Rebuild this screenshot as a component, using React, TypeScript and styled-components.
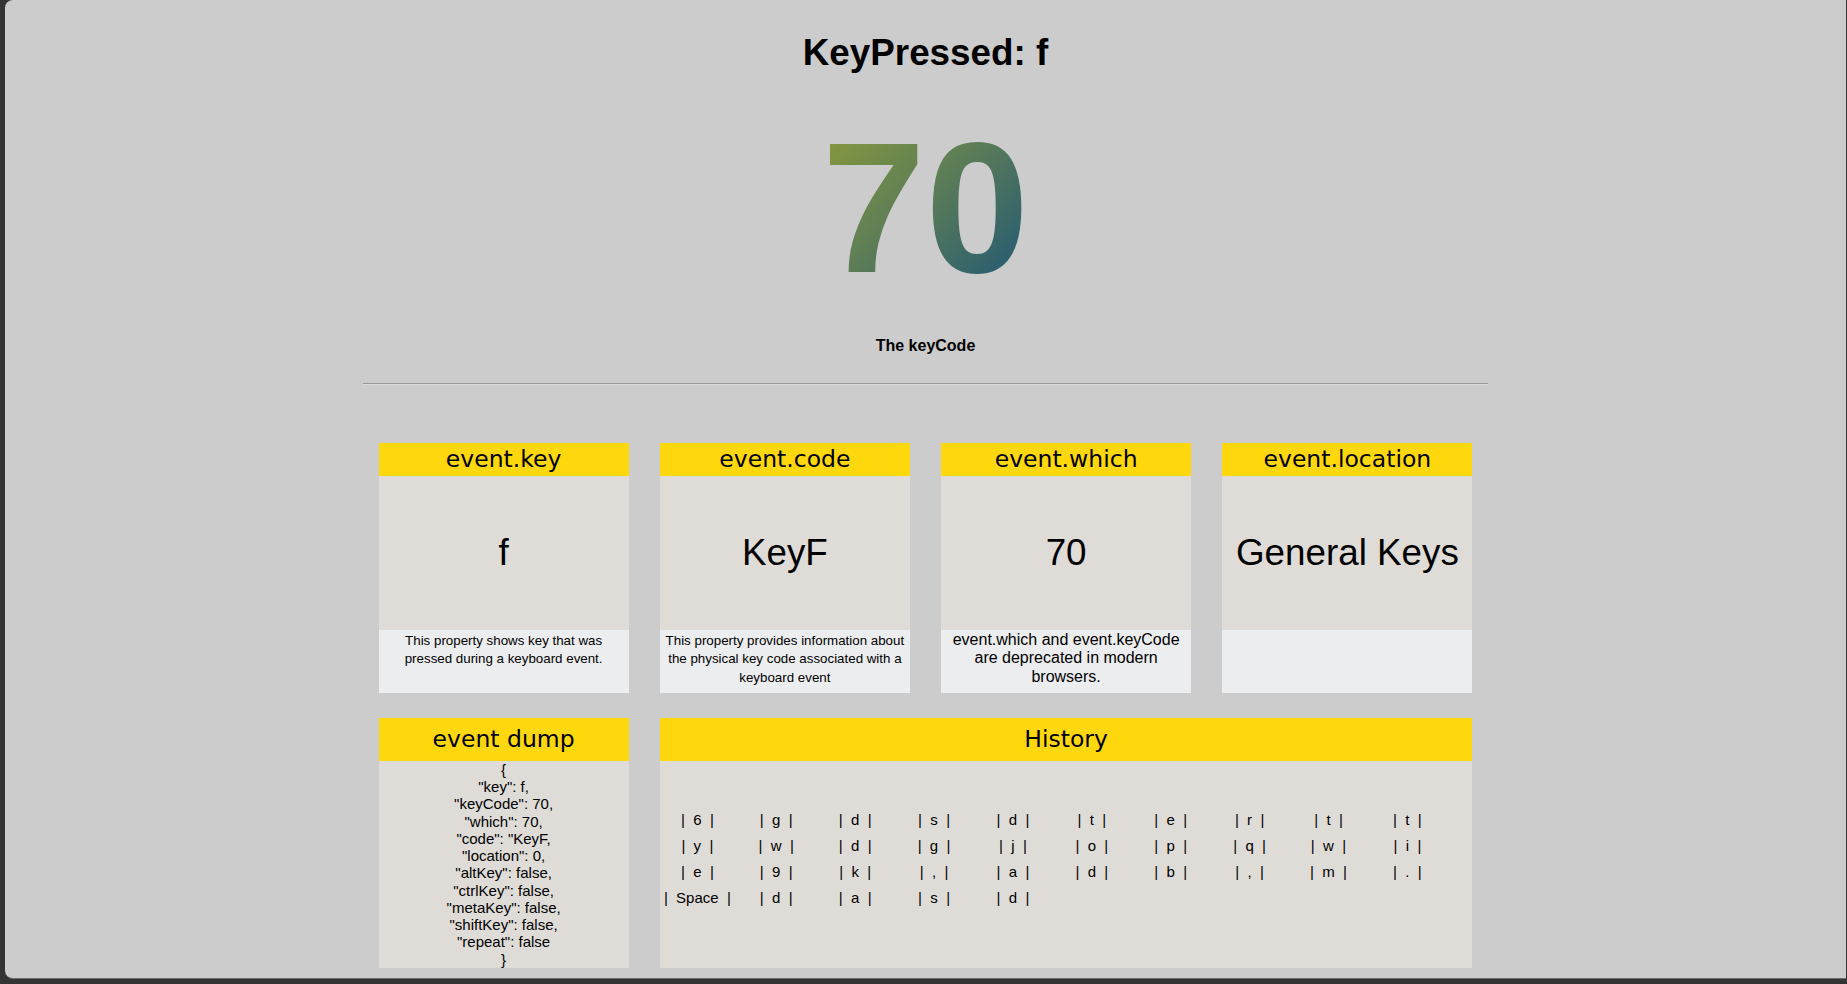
import React from "react";
import styled, { createGlobalStyle } from "styled-components";

const GlobalStyle = createGlobalStyle`
  html, body {
    margin: 0;
    padding: 0;
    background: #343434;
  }
  body {
    font-family: "Liberation Sans", Arial, sans-serif;
    color: #000;
  }
  * { box-sizing: border-box; }
`;

const Frame = styled.div`
  display: flex;
  width: 1847px;
  height: 984px;
  padding: 0 1px 5px 5px;
  background: #343434;
  overflow: hidden;
`;

const Panel = styled.main`
  flex: 1;
  display: flex;
  flex-direction: column;
  align-items: center;
  background: #cccccc;
  border-radius: 8px 0 0 8px;
  border-bottom: 1px solid #6a6a6a;
  overflow: hidden;
`;

const Title = styled.h1`
  margin: 0;
  padding-top: 32px;
  font-size: 36.8px;
  line-height: 42.5px;
  font-weight: 700;
  text-align: center;
`;

const BigCode = styled.div`
  display: inline-block;
  margin-top: 40px;
  font-size: 186px;
  line-height: 1;
  font-weight: 700;
  background: linear-gradient(135deg, #8c9c3a 0%, #5e7e56 45%, #1a5478 100%);
  -webkit-background-clip: text;
  background-clip: text;
  color: transparent;
`;

const Caption = styled.p`
  margin: 36px 0 0;
  font-size: 16px;
  line-height: 18.4px;
  font-weight: 700;
`;

const Rule = styled.hr`
  width: 1125px;
  margin: 28px 0 0;
  border: 0;
  border-top: 1px solid #9a9a9a;
  border-bottom: 1px solid #dcdcdc;
`;

const Grid = styled.section`
  display: grid;
  grid-template-columns: repeat(4, 250px);
  grid-auto-rows: 250px;
  column-gap: 31.25px;
  row-gap: 25px;
  justify-content: center;
  width: 1125px;
  margin-top: 58px;
`;

const Card = styled.article<{ $span?: number }>`
  display: flex;
  flex-direction: column;
  grid-column: span ${(p) => p.$span ?? 1};
  background: #dfdcd8;
`;

const CardHeader = styled.header<{ $tall?: boolean }>`
  display: flex;
  align-items: center;
  justify-content: center;
  flex: 0 0 ${(p) => (p.$tall ? "43px" : "33px")};
  background: #ffd70d;
  font-family: "DejaVu Sans", "Noto Sans", sans-serif;
  font-size: 23.5px;
  color: #000;
`;

const Value = styled.div`
  display: flex;
  align-items: center;
  justify-content: center;
  flex: 0 0 154px;
  font-size: 36.8px;
  white-space: nowrap;
`;

const Desc = styled.p<{ $small?: boolean }>`
  flex: 1;
  margin: 0;
  padding: ${(p) => (p.$small ? "2px 3px 0" : "1px 3px 0")};
  background: #ecedef;
  text-align: center;
  font-size: ${(p) => (p.$small ? "13.33px" : "16px")};
  line-height: 18.4px;
`;

const Dump = styled.pre`
  flex: 1;
  margin: 0;
  font-family: "Liberation Sans", Arial, sans-serif;
  font-size: 15px;
  line-height: 17.25px;
  text-align: center;
  white-space: pre;
`;

const HistoryBody = styled.div`
  flex: 1;
  display: flex;
  flex-wrap: wrap;
  align-content: flex-start;
  column-gap: 3.9px;
  padding-top: 46px;
`;

const HistoryItem = styled.span`
  width: 75px;
  height: 26px;
  line-height: 26px;
  font-size: 15px;
  text-align: center;
  white-space: pre;
`;

const cards = [
  {
    title: "event.key",
    value: "f",
    desc: "This property shows key that was pressed during a keyboard event.",
    small: true,
  },
  {
    title: "event.code",
    value: "KeyF",
    desc: "This property provides information about the physical key code associated with a keyboard event",
    small: true,
  },
  {
    title: "event.which",
    value: "70",
    desc: "event.which and event.keyCode are deprecated in modern browsers.",
    small: false,
  },
  { title: "event.location", value: "General Keys", desc: "", small: false },
];

const dumpText = `{
"key": f,
"keyCode": 70,
"which": 70,
"code": "KeyF,
"location": 0,
"altKey": false,
"ctrlKey": false,
"metaKey": false,
"shiftKey": false,
"repeat": false
}`;

const history = [
  "6", "g", "d", "s", "d", "t", "e", "r", "t", "t",
  "y", "w", "d", "g", "j", "o", "p", "q", "w", "i",
  "e", "9", "k", ",", "a", "d", "b", ",", "m", ".",
  "Space", "d", "a", "s", "d",
];

export default function App() {
  return (
    <>
      <GlobalStyle />
      <Frame>
        <Panel>
          <Title>KeyPressed: f</Title>
          <BigCode>70</BigCode>
          <Caption>The keyCode</Caption>
          <Rule />
          <Grid>
            {cards.map((c) => (
              <Card key={c.title}>
                <CardHeader>{c.title}</CardHeader>
                <Value>{c.value}</Value>
                <Desc $small={c.small}>{c.desc}</Desc>
              </Card>
            ))}
            <Card>
              <CardHeader $tall>event dump</CardHeader>
              <Dump>{dumpText}</Dump>
            </Card>
            <Card $span={3}>
              <CardHeader $tall>History</CardHeader>
              <HistoryBody>
                {history.map((k, i) => (
                  <HistoryItem key={i}>{`|  ${k}  |`}</HistoryItem>
                ))}
              </HistoryBody>
            </Card>
          </Grid>
        </Panel>
      </Frame>
    </>
  );
}
